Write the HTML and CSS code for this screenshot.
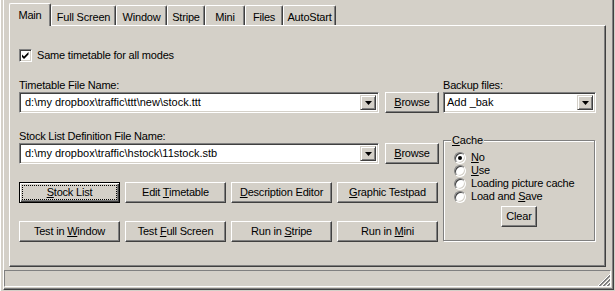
FILE: index.html
```html
<!DOCTYPE html>
<html lang="en">

<head>
  <meta charset="UTF-8" />
  <title>Options</title>
  <link rel="stylesheet" href="styles.css">
</head>

<body>

  <div class="window">
    <div class="tabs">
      <div class="tab tab-main active">Main</div>
      <div class="tab tab-full">Full Screen</div>
      <div class="tab tab-window">Window</div>
      <div class="tab tab-stripe">Stripe</div>
      <div class="tab tab-mini">Mini</div>
      <div class="tab tab-files">Files</div>
      <div class="tab tab-auto">AutoStart</div>
    </div>

    <div class="panel">
      <div class="check-row">
        <span class="checkbox">
          <svg width="9" height="9" viewBox="0 0 9 9"><path d="M1 3.5l2 2 4.5-4.5v2.5l-4.5 4.5-2-2z" fill="#000" /></svg>
        </span>
        <span>Same timetable for all modes</span>
      </div>

      <div class="columns">
        <div class="col-left">
          <div class="field-label">Timetable File Name:</div>
          <div class="field-row">
            <div class="combo combo-edit">
              <span class="combo-text">d:\my dropbox\traffic\ttt\new\stock.ttt</span>
              <span class="combo-btn"><svg width="7" height="4" viewBox="0 0 7 4"><path d="M0 0h7l-3.5 4z" fill="#000" /></svg></span>
            </div>
            <button class="btn btn-browse"><u>B</u>rowse</button>
          </div>

          <div class="field-label gap-label">Stock List Definition File Name:</div>
          <div class="field-row">
            <div class="combo combo-edit">
              <span class="combo-text">d:\my dropbox\traffic\hstock\11stock.stb</span>
              <span class="combo-btn"><svg width="7" height="4" viewBox="0 0 7 4"><path d="M0 0h7l-3.5 4z" fill="#000" /></svg></span>
            </div>
            <button class="btn btn-browse"><u>B</u>rowse</button>
          </div>

          <div class="btn-row">
            <button class="btn btn-default"><span class="focus"><u>S</u>tock List</span></button>
            <button class="btn">Edit <u>T</u>imetable</button>
            <button class="btn"><u>D</u>escription Editor</button>
            <button class="btn"><u>G</u>raphic Testpad</button>
          </div>
          <div class="btn-row">
            <button class="btn">Test in <u>W</u>indow</button>
            <button class="btn">Test <u>F</u>ull Screen</button>
            <button class="btn">Run in <u>S</u>tripe</button>
            <button class="btn">Run in <u>M</u>ini</button>
          </div>
        </div>

        <div class="col-right">
          <div class="field-label">Backup files:</div>
          <div class="combo combo-list">
            <span class="combo-text">Add _bak</span>
            <span class="combo-btn"><svg width="7" height="4" viewBox="0 0 7 4"><path d="M0 0h7l-3.5 4z" fill="#000" /></svg></span>
          </div>

          <div class="group">
            <div class="group-title"><u>C</u>ache</div>
            <div class="radio-row"><span class="radio checked"></span><span><u>N</u>o</span></div>
            <div class="radio-row"><span class="radio"></span><span><u>U</u>se</span></div>
            <div class="radio-row"><span class="radio"></span><span>Loading picture cache</span></div>
            <div class="radio-row"><span class="radio"></span><span>Load and <u>S</u>ave</span></div>
            <button class="btn btn-clear">Clear</button>
          </div>
        </div>
      </div>
    </div>

    <div class="statusbar">
      <svg class="grip" width="12" height="12" viewBox="0 0 12 12" shape-rendering="crispEdges">
        <path d="M11 0h1v1h-1zM10 1h1v1h-1zM9 2h1v1h-1zM8 3h1v1h-1zM7 4h1v1h-1zM6 5h1v1h-1zM5 6h1v1h-1zM4 7h1v1h-1zM3 8h1v1h-1zM2 9h1v1h-1zM1 10h1v1h-1zM0 11h1v1h-1z" fill="#fff" />
        <path d="M11 1h1v2h-1zM10 2h1v2h-1zM9 3h1v2h-1zM8 4h1v2h-1zM7 5h1v2h-1zM6 6h1v2h-1zM5 7h1v2h-1zM4 8h1v2h-1zM3 9h1v2h-1zM2 10h1v2h-1zM1 11h1v1h-1z" fill="#808080" />
        <path d="M11 4h1v1h-1zM10 5h1v1h-1zM9 6h1v1h-1zM8 7h1v1h-1zM7 8h1v1h-1zM6 9h1v1h-1zM5 10h1v1h-1zM4 11h1v1h-1z" fill="#fff" />
        <path d="M11 5h1v2h-1zM10 6h1v2h-1zM9 7h1v2h-1zM8 8h1v2h-1zM7 9h1v2h-1zM6 10h1v2h-1zM5 11h1v1h-1z" fill="#808080" />
        <path d="M11 8h1v1h-1zM10 9h1v1h-1zM9 10h1v1h-1zM8 11h1v1h-1z" fill="#fff" />
        <path d="M11 9h1v2h-1zM10 10h1v2h-1zM9 11h1v1h-1z" fill="#808080" />
      </svg>
    </div>
  </div>

</body>

</html>
```

FILE: styles.css
```css
* {
  box-sizing: border-box;
}

body {
  margin: 0;
  padding: 0;
  background-color: #d4d0c8;
  border-left: 1px solid #fff;
  font-family: "Liberation Sans", Arial, sans-serif;
  font-size: 11px;
  letter-spacing: -0.2px;
  line-height: 13px;
  color: #000;
  height: 291px;
  overflow: hidden;
}

u {
  text-decoration: underline;
  text-underline-offset: 1px;
}

.window {
  margin-left: 2px;
  width: 611px;
  height: 290px;
  border-left: 1px solid #fff;
  border-right: 1px solid #404040;
  border-bottom: 1px solid #404040;
  box-shadow: inset -1px -1px #808080;
}

/* tabs */

.tabs {
  display: flex;
  align-items: flex-end;
  margin-left: 5px;
  padding-top: 3px;
}

.tab {
  height: 20px;
  padding-top: 5px;
  text-align: center;
  border-top: 1px solid #fff;
  border-left: 1px solid #fff;
  border-right: 1px solid #404040;
  border-radius: 2px 2px 0 0;
  box-shadow: inset -1px 0 #808080;
  background-color: #d4d0c8;
}

.tab.active {
  height: 23px;
  margin-bottom: -1px;
  padding-top: 5px;
  position: relative;
  z-index: 1;
}

.tab-main { width: 42px; }
.tab-full { width: 65px; }
.tab-window { width: 51px; }
.tab-stripe { width: 38px; }
.tab-mini { width: 40px; }
.tab-files { width: 38px; }
.tab-auto { width: 53px; }

.panel {
  margin-left: 5px;
  width: 597px;
  height: 242px;
  padding: 23px 0 0 9px;
  border-top: 1px solid #fff;
  border-left: 1px solid #fff;
  border-right: 1px solid #404040;
  border-bottom: 1px solid #404040;
  box-shadow: inset -1px -1px #808080;
}

/* checkbox */

.check-row {
  display: flex;
  align-items: center;
  gap: 5px;
  height: 13px;
}

.checkbox {
  width: 13px;
  height: 13px;
  display: flex;
  align-items: center;
  justify-content: center;
  background-color: #fff;
  border: 1px solid;
  border-color: #808080 #fff #fff #808080;
  box-shadow: inset 1px 1px #404040, inset -1px -1px #d4d0c8;
}

.columns {
  display: flex;
  gap: 4px;
  margin-top: 17px;
}

.col-left {
  width: 420px;
}

.col-right {
  width: 153px;
}

.field-label {
  height: 13px;
}

.gap-label {
  margin-top: 17px;
}

.field-row {
  display: flex;
  gap: 6px;
}

/* combo boxes */

.combo {
  display: flex;
  height: 21px;
  padding: 2px;
  background-color: #fff;
  border: 1px solid;
  border-color: #808080 #fff #fff #808080;
  box-shadow: inset 1px 1px #404040, inset -1px -1px #d4d0c8;
}

.combo-edit {
  width: 360px;
}

.combo-text {
  flex: 1;
  padding-left: 3px;
  line-height: 15px;
  letter-spacing: 0;
  white-space: nowrap;
  overflow: hidden;
}

.combo-list .combo-text {
  padding-left: 1px;
}

.combo-btn {
  width: 16px;
  display: flex;
  align-items: center;
  justify-content: center;
  background-color: #d4d0c8;
  border: 1px solid;
  border-color: #d4d0c8 #404040 #404040 #d4d0c8;
  box-shadow: inset 1px 1px #fff, inset -1px -1px #808080;
}

/* buttons */

.btn {
  font: inherit;
  letter-spacing: inherit;
  line-height: 13px;
  color: #000;
  margin: 0;
  padding: 0;
  height: 21px;
  text-align: center;
  white-space: nowrap;
  background-color: #d4d0c8;
  border: 1px solid;
  border-color: #fff #404040 #404040 #fff;
  box-shadow: inset -1px -1px #808080, inset 1px 1px #d4d0c8;
}

.btn-browse {
  width: 54px;
}

.btn-row {
  display: flex;
  gap: 5px;
  margin-top: 18px;
}

.btn-row .btn {
  width: 101px;
}

.btn-default {
  border-color: #000;
  box-shadow: inset 1px 1px #fff, inset -1px -1px #404040, inset -2px -2px #808080;
}

.btn-default .focus {
  display: inline-block;
  width: 93px;
  height: 13px;
  outline: 1px dotted #000;
  outline-offset: 0;
  text-align: center;
}

/* cache group */

.group {
  margin-top: 27px;
  width: 152px;
  height: 101px;
  border: 1px solid #808080;
  box-shadow: inset 1px 1px #fff, 1px 1px #fff;
}

.group-title {
  width: fit-content;
  margin: -7px 0 0 7px;
  padding: 0 1px;
  background-color: #d4d0c8;
}

.radio-row {
  display: flex;
  align-items: center;
  gap: 5px;
  height: 13px;
  padding-left: 10px;
}

.group-title + .radio-row {
  margin-top: 4px;
}

.radio {
  width: 12px;
  height: 12px;
  border-radius: 50%;
  background-color: #fff;
  border: 1px solid;
  border-color: #808080 #fff #fff #808080;
  box-shadow: inset 1px 1px #404040, inset -1px -1px #d4d0c8;
  display: flex;
  align-items: center;
  justify-content: center;
}

.radio.checked::after {
  content: "";
  width: 4px;
  height: 4px;
  border-radius: 50%;
  background-color: #000;
}

.btn-clear {
  display: block;
  width: 36px;
  margin: 3px auto 0;
}

/* status bar */

.statusbar {
  margin-top: 3px;
  width: 607px;
  height: 17px;
  border: 1px solid;
  border-color: #808080 #fff #fff #808080;
  display: flex;
  justify-content: flex-end;
  align-items: flex-end;
}

.grip {
  display: block;
}
```
